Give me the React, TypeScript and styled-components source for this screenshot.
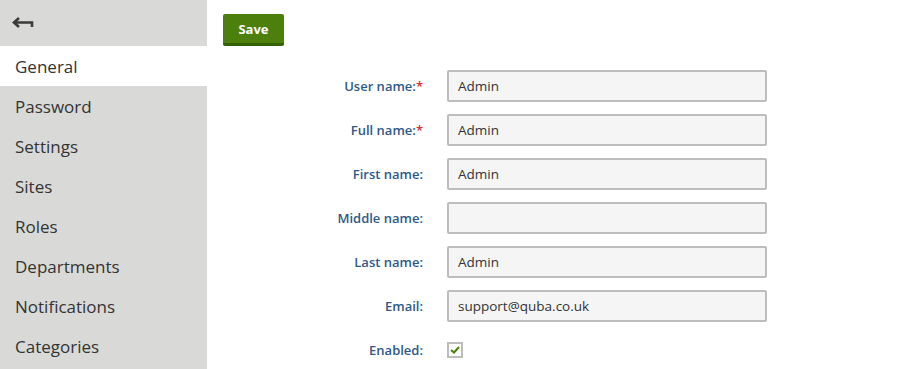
import React from "react";
import styled, { createGlobalStyle } from "styled-components";

const GlobalStyle = createGlobalStyle`
  body {
    margin: 0;
    font-family: "Open Sans", "Noto Sans", "Liberation Sans", sans-serif;
    background: #fff;
  }
`;

const Layout = styled.div`
  display: flex;
  width: 914px;
  height: 369px;
  overflow: hidden;
`;

const Sidebar = styled.nav`
  width: 207px;
  flex-shrink: 0;
  background: #d9dad7;
  display: flex;
  flex-direction: column;
`;

const BackBar = styled.div`
  height: 46px;
  display: flex;
  align-items: center;
  padding-left: 12px;
  color: #3a3a3a;
`;

const NavItem = styled.div<{ $active?: boolean }>`
  height: 40px;
  display: flex;
  align-items: center;
  padding-left: 15px;
  font-size: 17px;
  color: #333;
  background: ${(p) => (p.$active ? "#fff" : "transparent")};
`;

const Main = styled.main`
  flex: 1;
  padding: 14px 0 0 16px;
`;

const SaveButton = styled.button`
  width: 61px;
  height: 32px;
  border: none;
  border-bottom: 3px solid #356105;
  border-radius: 2px;
  background: #4d7f0d;
  color: #fff;
  font-family: inherit;
  font-weight: 700;
  font-size: 13px;
  padding: 0;
  cursor: pointer;
`;

const Form = styled.div`
  display: grid;
  grid-template-columns: 200px 320px;
  grid-auto-rows: 32px;
  column-gap: 24px;
  row-gap: 12px;
  margin-top: 24px;
`;

const Label = styled.label`
  text-align: right;
  align-self: center;
  font-size: 13px;
  font-weight: 600;
  color: #2e5a87;
`;

const Req = styled.span`
  color: #d9302c;
`;

const Input = styled.input`
  box-sizing: border-box;
  width: 320px;
  height: 32px;
  border: 2px solid #bdbdbd;
  border-radius: 2px;
  background: #f5f5f5;
  padding: 0 9px;
  font-family: inherit;
  font-size: 13.5px;
  color: #333;
  outline: none;
`;

const CheckBox = styled.span`
  box-sizing: border-box;
  width: 16px;
  height: 16px;
  border: 2px solid #bdbdbd;
  background: #fff;
  display: flex;
  align-items: center;
  justify-content: center;
  align-self: center;
`;

const fields = [
  { label: "User name:", value: "Admin", required: true },
  { label: "Full name:", value: "Admin", required: true },
  { label: "First name:", value: "Admin" },
  { label: "Middle name:", value: "" },
  { label: "Last name:", value: "Admin" },
  { label: "Email:", value: "support@quba.co.uk" },
];

const navItems = ["General", "Password", "Settings", "Sites", "Roles", "Departments", "Notifications", "Categories"];

export default function App() {
  return (
    <>
      <GlobalStyle />
      <Layout>
        <Sidebar>
          <BackBar>
            <svg width="22" height="14" viewBox="0 0 22 14">
              <path d="M7 2 L2 6.5 L7 11" fill="none" stroke="#3a3a3a" strokeWidth="2.6" strokeLinejoin="miter" />
              <path d="M2.5 6.5 H20 V11" fill="none" stroke="#3a3a3a" strokeWidth="2.6" />
            </svg>
          </BackBar>
          {navItems.map((n, i) => (
            <NavItem key={n} $active={i === 0}>
              {n}
            </NavItem>
          ))}
        </Sidebar>
        <Main>
          <SaveButton>Save</SaveButton>
          <Form>
            {fields.map((f) => (
              <React.Fragment key={f.label}>
                <Label>
                  {f.label}
                  {f.required && <Req>*</Req>}
                </Label>
                <Input defaultValue={f.value} readOnly />
              </React.Fragment>
            ))}
            <Label>Enabled:</Label>
            <CheckBox>
              <svg width="10" height="8" viewBox="0 0 10 8">
                <path d="M1 4 L4 6.5 L9 1" fill="none" stroke="#4d7f0d" strokeWidth="2" />
              </svg>
            </CheckBox>
          </Form>
        </Main>
      </Layout>
    </>
  );
}
